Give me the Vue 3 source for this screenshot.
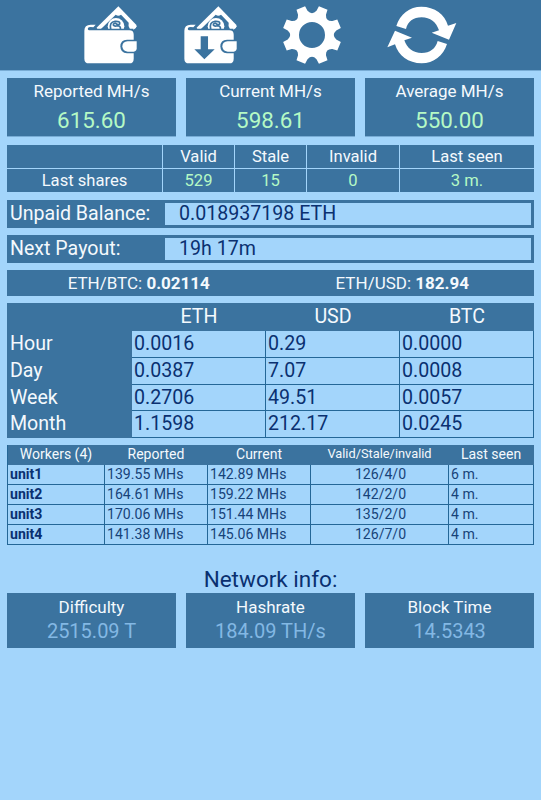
<template>
  <div class="screen">
    <header class="toolbar">
      <button class="tool wallet" type="button" aria-label="Wallet">
        <svg viewBox="42 18 160 176">
          <path class="fill" d="M75 88 L145 19 L197 73 Q205 82 190 89 Z" />
          <path class="cut" d="M92 88 L137 44 Q145 50 153 44 L176 68 Q173 77 180 88 Z" />
          <circle class="fill" cx="138" cy="79" r="25" />
          <path class="line" d="M122 88 Q117 66 135 64 Q151 63 149 72 Q144 77 137 70 Q130 69 130 75 Q133 80 142 77 Q153 78 151 88" />
          <path class="cut" d="M50 92 L56 78 L78 82 L82 86 H190 V94 H50 Z" />
          <path class="fill" d="M77 74 H62 Q43 74 43 92 V176 Q43 190 57 190 H178 Q191 190 191 176 V104 Q191 91 178 91 H61 Q51 91 54 84 Q56 80 70 82 Z" />
          <path class="cut" d="M202 119 H171 Q151 120 151 139 Q151 159 171 160 H202 Z" />
          <path class="fill" d="M200 124 H173 Q157 125 157 139 Q157 154 173 155 H191 Q200 154 200 145 Z" />
        </svg>
      </button>
      <button class="tool wallet" type="button" aria-label="Payouts">
        <svg viewBox="42 18 160 176">
          <path class="fill" d="M75 88 L145 19 L197 73 Q205 82 190 89 Z" />
          <path class="cut" d="M92 88 L137 44 Q145 50 153 44 L176 68 Q173 77 180 88 Z" />
          <circle class="fill" cx="138" cy="79" r="25" />
          <path class="line" d="M122 88 Q117 66 135 64 Q151 63 149 72 Q144 77 137 70 Q130 69 130 75 Q133 80 142 77 Q153 78 151 88" />
          <path class="cut" d="M50 92 L56 78 L78 82 L82 86 H190 V94 H50 Z" />
          <path class="fill" d="M77 74 H62 Q43 74 43 92 V176 Q43 190 57 190 H178 Q191 190 191 176 V104 Q191 91 178 91 H61 Q51 91 54 84 Q56 80 70 82 Z" />
          <path class="cut" d="M202 119 H171 Q151 120 151 139 Q151 159 171 160 H202 Z" />
          <path class="fill" d="M200 124 H173 Q157 125 157 139 Q157 154 173 155 H191 Q200 154 200 145 Z" />
          <path class="cut" d="M92 109 H114 V148 H134 L103 178 L73 148 H92 Z" />
        </svg>
      </button>
      <button class="tool gear" type="button" aria-label="Settings">
        <svg viewBox="-87 -87 174 174">
          <path class="fill" fill-rule="evenodd" :d="gearPath" />
        </svg>
      </button>
      <button class="tool refresh" type="button" aria-label="Refresh">
        <svg viewBox="352 18 210 174">
          <path class="fill" d="M380 78 C391 42 420 20 455 20 C495 20 526 43 535 77 L560 69 L538 119 L486 98 L508 91 C500 67 482 52 456 52 C431 52 414 65 409 87 Z" />
          <path class="fill" d="M532 132 C521 167 492 190 456 190 C416 190 386 167 376 133 L353 142 L376 92 L427 113 L404 121 C412 145 430 159 456 159 C481 159 498 146 504 123 Z" />
        </svg>
      </button>
    </header>

    <main class="content">
      <section class="cards hashrates">
        <div v-for="card in hashrates" :key="card.label" class="card">
          <div class="card-label">{{ card.label }}</div>
          <div class="card-value">{{ card.value }}</div>
        </div>
      </section>

      <section class="shares">
        <div v-for="(cell, i) in shares" :key="i" class="share-cell" :class="{ good: i > 5 }">{{ cell }}</div>
      </section>

      <section v-for="row in payouts" :key="row.label" class="payout">
        <div class="payout-label">{{ row.label }}</div>
        <div class="payout-value">{{ row.value }}</div>
      </section>

      <section class="rates">
        <div>ETH/BTC: <b>0.02114</b></div>
        <div>ETH/USD: <b>182.94</b></div>
      </section>

      <section class="income">
        <div class="income-head"></div>
        <div v-for="name in ['ETH', 'USD', 'BTC']" :key="name" class="income-head">{{ name }}</div>
        <template v-for="row in income" :key="row.period">
          <div class="income-period">{{ row.period }}</div>
          <div v-for="(value, i) in row.values" :key="i" class="income-value">{{ value }}</div>
        </template>
      </section>

      <section class="workers">
        <div class="workers-row workers-head">
          <div>Workers ({{ workers.length }})</div>
          <div>Reported</div>
          <div>Current</div>
          <div class="small">Valid/Stale/invalid</div>
          <div>Last seen</div>
        </div>
        <div v-for="worker in workers" :key="worker.name" class="workers-row">
          <div class="name">{{ worker.name }}</div>
          <div>{{ worker.reported }} MHs</div>
          <div>{{ worker.current }} MHs</div>
          <div class="center">{{ worker.shares }}</div>
          <div>{{ worker.seen }}</div>
        </div>
      </section>

      <h2 class="network-title">Network info:</h2>
      <section class="cards network">
        <div v-for="card in network" :key="card.label" class="card">
          <div class="card-label">{{ card.label }}</div>
          <div class="card-value">{{ card.value }}</div>
        </div>
      </section>
    </main>
  </div>
</template>

<script setup>
const hashrates = [
  { label: 'Reported MH/s', value: '615.60' },
  { label: 'Current MH/s', value: '598.61' },
  { label: 'Average MH/s', value: '550.00' }
]

const shares = [
  '', 'Valid', 'Stale', 'Invalid', 'Last seen',
  'Last shares', '529', '15', '0', '3 m.'
]

const payouts = [
  { label: 'Unpaid Balance:', value: '0.018937198 ETH' },
  { label: 'Next Payout:', value: '19h 17m' }
]

const income = [
  { period: 'Hour', values: ['0.0016', '0.29', '0.0000'] },
  { period: 'Day', values: ['0.0387', '7.07', '0.0008'] },
  { period: 'Week', values: ['0.2706', '49.51', '0.0057'] },
  { period: 'Month', values: ['1.1598', '212.17', '0.0245'] }
]

const workers = [
  { name: 'unit1', reported: '139.55', current: '142.89', shares: '126/4/0', seen: '6 m.' },
  { name: 'unit2', reported: '164.61', current: '159.22', shares: '142/2/0', seen: '4 m.' },
  { name: 'unit3', reported: '170.06', current: '151.44', shares: '135/2/0', seen: '4 m.' },
  { name: 'unit4', reported: '141.38', current: '145.06', shares: '126/7/0', seen: '4 m.' }
]

const network = [
  { label: 'Difficulty', value: '2515.09 T' },
  { label: 'Hashrate', value: '184.09 TH/s' },
  { label: 'Block Time', value: '14.5343' }
]

// Eight teeth with rounded valleys between them and a round hole
const polar = (deg, r) => {
  const a = (deg * Math.PI) / 180
  return `${(r * Math.sin(a)).toFixed(1)} ${(-r * Math.cos(a)).toFixed(1)}`
}

const buildGear = () => {
  let d = ''
  for (let k = 0; k < 8; k++) {
    const a = 22.5 + k * 45
    d += `${k ? 'L' : 'M'}${polar(a - 9, 89)} L${polar(a + 9, 89)} L${polar(a + 12, 74)} Q${polar(a + 22.5, 58)} ${polar(a + 33, 74)} `
  }
  return d + 'Z M39 0 A39 39 0 1 0 -39 0 A39 39 0 1 0 39 0 Z'
}

const gearPath = buildGear()
</script>

<style>
body {
  background: #a3d5fb;
}
</style>

<style scoped>
.screen {
  min-height: 800px;
  background: #a3d5fb;
  color: #0a3070;
  font-family: Roboto, sans-serif;
  overflow: hidden;
}

.toolbar {
  display: flex;
  box-sizing: border-box;
  height: 71px;
  padding: 6px 0 0 84px;
  gap: 46.4px;
  background: #3b739f;
  border-bottom: 1px solid #78acd5;
}

.tool {
  flex: none;
  padding: 0;
  border: 0;
  background: none;
}

.tool svg {
  display: block;
  width: 100%;
  height: 100%;
}

.wallet {
  width: 53.4px;
  height: 58.7px;
}

.gear {
  width: 58px;
  height: 58px;
  margin-left: -1px;
}

.refresh {
  width: 70px;
  height: 58px;
}

.fill {
  fill: #fff;
}

.cut {
  fill: #3b739f;
}

.line {
  fill: none;
  stroke: #3b739f;
  stroke-width: 5;
}

.content {
  padding: 7px 7px 0;
}

.cards {
  display: grid;
  grid-template-columns: repeat(3, 1fr);
  gap: 10px;
}

.card {
  background: #3b739f;
  text-align: center;
}

.card-label {
  color: #f4f9fd;
  font-size: 17px;
  line-height: 20px;
}

.hashrates .card {
  height: 55px;
  padding-top: 3px;
  margin-bottom: 8px;
  border-bottom: 1px solid #78acd5;
}

.hashrates .card-value {
  margin-top: 5px;
  color: #b5f9c5;
  font-size: 22.4px;
  line-height: 28px;
}

.shares {
  display: grid;
  grid-template-columns: 155px 71px 71px 92px 1fr;
  grid-template-rows: 23px 23px;
  gap: 1px;
}

.share-cell {
  background: #3b739f;
  color: #f4f9fd;
  font-size: 16.6px;
  line-height: 23px;
  text-align: center;
}

.share-cell.good {
  color: #b5f9c5;
}

.payout {
  display: grid;
  grid-template-columns: 155px 1fr;
  box-sizing: border-box;
  height: 28px;
  margin-top: 7px;
  padding: 3px;
  background: #3b739f;
}

.shares + .payout {
  margin-top: 8px;
}

.payout-label {
  color: #f4f9fd;
  font-size: 19.6px;
  line-height: 21px;
}

.payout-value {
  padding-left: 14px;
  background: #a3d5fb;
  font-size: 19.6px;
  line-height: 21px;
}

.rates {
  display: grid;
  grid-template-columns: 1fr 1fr;
  margin-top: 7px;
  background: #3b739f;
  color: #f4f9fd;
  font-size: 17px;
  line-height: 26px;
  text-align: center;
}

.income {
  display: grid;
  grid-template-columns: 125px 134px 134px 1fr;
  grid-template-rows: 28px repeat(4, 26.75px);
  margin-top: 7px;
  background: #3b739f;
  font-size: 19.6px;
}

.income-head {
  color: #f4f9fd;
  line-height: 27px;
  text-align: center;
}

.income-period {
  padding-left: 3px;
  color: #f4f9fd;
  line-height: 25px;
}

.income-value {
  padding-left: 2px;
  background: #a3d5fb;
  border-right: 1px solid #246797;
  border-bottom: 1px solid #246797;
  line-height: 25px;
}

.workers {
  margin-top: 7px;
  border-left: 1px solid #246797;
}

.workers-row {
  display: grid;
  grid-template-columns: 97px 103px 103px 138px 1fr;
  color: #174379;
  font-size: 14.1px;
  line-height: 19px;
}

.workers-row > div {
  height: 19px;
  padding-left: 2px;
  border-right: 1px solid #246797;
  border-bottom: 1px solid #246797;
}

.workers-row .name {
  color: #0a3070;
  font-weight: 700;
}

.workers-row .center {
  text-align: center;
}

.workers-head > div {
  padding-left: 0;
  border-color: #3b739f;
  background: #3b739f;
  color: #f4f9fd;
  font-size: 14px;
  line-height: 19px;
  text-align: center;
}

.workers-head .small {
  font-size: 12.8px;
  line-height: 17px;
}

.network-title {
  margin: 21px 0 0;
  font-size: 22.5px;
  font-weight: 400;
  line-height: 27px;
  text-align: center;
}

.network .card {
  height: 53px;
  padding-top: 2px;
}

.network .card-label {
  line-height: 24px;
}

.network .card-value {
  color: #83b8e4;
  font-size: 20px;
  line-height: 25px;
}
</style>
